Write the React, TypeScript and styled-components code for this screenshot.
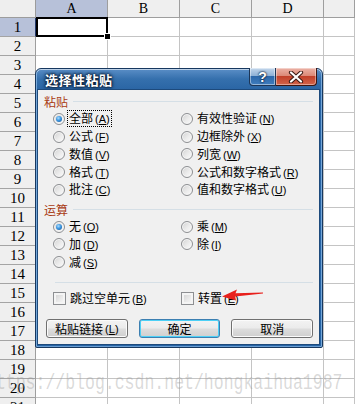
import React from "react";
import styled, { createGlobalStyle } from "styled-components";

const GlobalStyle = createGlobalStyle`
  html, body {
    margin: 0;
    padding: 0;
    background: #fff;
  }
  body {
    width: 355px;
    height: 404px;
    overflow: hidden;
  }
`;

const COLUMNS = ["A", "B", "C", "D", ""];
const ROW_COUNT = 21;

type Choice = { text: string; key: string; checked?: boolean; focused?: boolean };

const pasteChoices: Choice[] = [
  { text: "全部", key: "A", checked: true, focused: true },
  { text: "公式", key: "F" },
  { text: "数值", key: "V" },
  { text: "格式", key: "T" },
  { text: "批注", key: "C" },
  { text: "有效性验证", key: "N" },
  { text: "边框除外", key: "X" },
  { text: "列宽", key: "W" },
  { text: "公式和数字格式", key: "R" },
  { text: "值和数字格式", key: "U" },
];

const operationChoices: Choice[] = [
  { text: "无", key: "O", checked: true },
  { text: "加", key: "D" },
  { text: "减", key: "S" },
  { text: "乘", key: "M" },
  { text: "除", key: "I" },
];

const Page = styled.div`
  position: relative;
  width: 355px;
  height: 404px;
  overflow: hidden;
  background: #fff;
`;

const Sheet = styled.div`
  display: grid;
  grid-template-columns: 36px repeat(4, 72px) 1fr;
  grid-template-rows: 18px;
  grid-auto-rows: 19px;
  font-family: "Liberation Serif", serif;
  color: #000;
`;

const Corner = styled.div`
  box-sizing: border-box;
  background: #eeeeee;
  border-right: 1px solid #9c9c9c;
  border-bottom: 1px solid #9c9c9c;
`;

const ColHeader = styled.div<{ $active?: boolean }>`
  box-sizing: border-box;
  display: flex;
  align-items: center;
  justify-content: center;
  font-size: 14px;
  padding-top: 1px;
  background: ${(p) => (p.$active ? "#b7c1d9" : "#efefef")};
  border-right: 1px solid #9e9e9e;
  border-bottom: 1px solid ${(p) => (p.$active ? "#22386a" : "#9e9e9e")};
`;

const RowHeader = styled.div<{ $active?: boolean }>`
  box-sizing: border-box;
  display: flex;
  align-items: center;
  justify-content: center;
  font-size: 15px;
  padding-top: 1px;
  background: ${(p) => (p.$active ? "#b7c1d9" : "#efefef")};
  border-right: 1px solid ${(p) => (p.$active ? "#22386a" : "#9e9e9e")};
  border-bottom: 1px solid #a4a4a4;
`;

const Cell = styled.div<{ $selected?: boolean }>`
  box-sizing: border-box;
  position: relative;
  border-right: 1px solid #c4c4c4;
  border-bottom: 1px solid #c4c4c4;

  ${(p) =>
    p.$selected &&
    `
    &::after {
      content: "";
      position: absolute;
      left: 0;
      top: -1px;
      right: -1px;
      bottom: -1px;
      border: 2px solid #000;
      z-index: 1;
    }
    &::before {
      content: "";
      position: absolute;
      right: -3px;
      bottom: -3px;
      width: 5px;
      height: 5px;
      background: #000;
      box-shadow: 0 0 0 1px #fff;
      z-index: 2;
    }
  `}
`;

const Dialog = styled.div`
  position: absolute;
  left: 35px;
  top: 68px;
  width: 288px;
  height: 280px;
  box-sizing: border-box;
  display: flex;
  flex-direction: column;
  padding: 0 3px 3px 2px;
  border: 1px solid #17385f;
  border-radius: 6px 6px 2px 2px;
  background: linear-gradient(180deg, #5a8ec6 0px, #3570ad 10px, #2a65a4 21px, #2664a5 100%);
  box-shadow: inset 0 1px 0 rgba(255, 255, 255, 0.6),
    inset 1px 0 0 rgba(150, 195, 240, 0.7), inset -1px 0 0 rgba(150, 195, 240, 0.7),
    inset 0 -1px 0 rgba(150, 195, 240, 0.6);
  font-family: "Noto Sans CJK SC", "Liberation Sans", sans-serif;
  font-size: 12px;
  color: #000;
`;

const TitleBar = styled.div`
  height: 21px;
  display: flex;
  align-items: center;
  padding-left: 7px;
`;

const Title = styled.span`
  flex: 1;
  color: #fff;
  font-size: 13px;
  font-weight: bold;
  letter-spacing: 0.5px;
  text-shadow: 0 0 2px #0a1a30, 0 0 3px #0a1a30, 0 0 4px #0a1a30;
`;

const Controls = styled.div`
  display: flex;
  align-self: flex-start;
  margin-top: -1px;
  margin-right: 2px;
  height: 18px;
`;

const HelpButton = styled.div`
  box-sizing: border-box;
  width: 27px;
  height: 18px;
  display: flex;
  align-items: center;
  justify-content: center;
  border: 1px solid #1c3556;
  border-top: none;
  border-radius: 0 0 0 4px;
  background: linear-gradient(180deg, #c3d7ec 0%, #8fb1d6 45%, #2d68aa 50%, #3f7dbd 100%);
  box-shadow: inset 0 0 0 1px rgba(255, 255, 255, 0.45);
  color: #fff;
  font-family: "Liberation Sans", sans-serif;
  font-weight: bold;
  font-size: 14px;
  text-shadow: 0 0 2px #0b1c33, 0 0 2px #0b1c33;
`;

const CloseButton = styled.div`
  box-sizing: border-box;
  width: 41px;
  height: 18px;
  display: flex;
  align-items: center;
  justify-content: center;
  border: 1px solid #3d1510;
  border-left: none;
  border-top: none;
  border-radius: 0 0 4px 0;
  background: linear-gradient(180deg, #ecb2a6 0%, #dc8a78 45%, #c2412a 50%, #d2644a 100%);
  box-shadow: inset 0 0 0 1px rgba(255, 255, 255, 0.4);
`;

const Body = styled.div`
  flex: 1;
  display: flex;
  flex-direction: column;
  padding: 3px 6px 0 6px;
  background: #f0f0f0;
  box-shadow: 0 0 0 1px #1d4a7c;
`;

const SectionHead = styled.div<{ $gap?: number }>`
  display: flex;
  align-items: center;
  height: 17px;
  margin-top: ${(p) => p.$gap ?? 0}px;
  color: #a83a12;
  font-size: 12px;

  &::after {
    content: "";
    flex: 1;
    height: 1px;
    margin-left: 5px;
    background: #d5dfe6;
  }
`;

const OptionGrid = styled.div<{ $rows: number }>`
  display: grid;
  grid-template-columns: 128px 1fr;
  grid-template-rows: repeat(${(p) => p.$rows}, 17.75px);
  grid-auto-flow: column;
  margin-left: 9px;
`;

const Option = styled.div`
  display: flex;
  align-items: center;
  gap: 3px;
  white-space: nowrap;
`;

const RadioMark = styled.span<{ $checked?: boolean }>`
  position: relative;
  box-sizing: border-box;
  width: 12px;
  height: 12px;
  border-radius: 50%;
  border: 1px solid #8d8f92;
  background: linear-gradient(135deg, #d2d2d2 0%, #ececec 55%, #fbfbfb 100%);
  box-shadow: inset 0 0 0 1px #f6f6f6;

  &::after {
    content: "";
    display: ${(p) => (p.$checked ? "block" : "none")};
    position: absolute;
    left: 2px;
    top: 2px;
    width: 6px;
    height: 6px;
    border-radius: 50%;
    background: radial-gradient(circle at 40% 35%, #a9dcff 0%, #3c96e0 45%, #14508f 100%);
  }
`;

const CheckMark = styled.span`
  box-sizing: border-box;
  width: 13px;
  height: 13px;
  border: 1px solid #8d8f92;
  background: linear-gradient(135deg, #cfcfcf 0%, #e9e9e9 55%, #fafafa 100%);
  box-shadow: inset 0 0 0 2px #f4f4f4;
`;

const OptionLabel = styled.span<{ $focused?: boolean }>`
  padding: 0 1px;
  line-height: 14px;
  outline: ${(p) => (p.$focused ? "1px dotted #000" : "none")};
`;

const Key = styled.span`
  margin-left: 2px;
  font-family: "Liberation Sans", sans-serif;
  font-size: 11px;
`;

const Separator = styled.div`
  height: 1px;
  margin: 11px 0 0 11px;
  background: #d5dfe6;
`;

const CheckRow = styled.div`
  display: grid;
  grid-template-columns: 128px 1fr;
  height: 14px;
  margin: 8px 0 0 9px;
`;

const ButtonRow = styled.div`
  display: flex;
  gap: 11px;
  margin-top: 14px;
  padding-left: 2px;
`;

const Button = styled.div<{ $default?: boolean }>`
  box-sizing: border-box;
  width: 82px;
  height: 19px;
  display: flex;
  align-items: center;
  justify-content: center;
  border: 1px solid ${(p) => (p.$default ? "#3c7fb1" : "#707070")};
  border-radius: 3px;
  background: linear-gradient(180deg, #f3f3f3 0%, #ebebeb 48%, #dddddd 52%, #cfcfcf 100%);
  box-shadow: ${(p) =>
    p.$default ? "inset 0 0 0 1px #4cd0f6" : "inset 0 0 0 1px #fbfbfb"};
  white-space: nowrap;
`;

const Arrow = styled.svg`
  position: absolute;
  left: 218px;
  top: 286px;
  overflow: visible;
`;

const Watermark = styled.div`
  position: absolute;
  left: -14px;
  top: 370px;
  font-family: "Liberation Mono", monospace;
  font-size: 16.5px;
  color: rgba(150, 150, 150, 0.36);
  white-space: nowrap;
  transform: scaleY(1.35);
  transform-origin: 0 0;
  pointer-events: none;
`;

const Choices = ({ items }: { items: Choice[] }) => (
  <>
    {items.map((c) => (
      <Option key={c.key}>
        <RadioMark $checked={c.checked} />
        <OptionLabel $focused={c.focused}>
          {c.text}
          <Key>
            (<u>{c.key}</u>)
          </Key>
        </OptionLabel>
      </Option>
    ))}
  </>
);

export default function App() {
  return (
    <Page>
      <GlobalStyle />
      <Sheet>
        <Corner />
        {COLUMNS.map((c, i) => (
          <ColHeader key={"h" + i} $active={c === "A"}>
            {c}
          </ColHeader>
        ))}
        {Array.from({ length: ROW_COUNT }).map((_, r) => (
          <React.Fragment key={r}>
            <RowHeader $active={r === 0}>{r + 1}</RowHeader>
            {COLUMNS.map((_, c) => (
              <Cell key={c} $selected={r === 0 && c === 0} />
            ))}
          </React.Fragment>
        ))}
      </Sheet>

      <Dialog>
        <TitleBar>
          <Title>选择性粘贴</Title>
          <Controls>
            <HelpButton>?</HelpButton>
            <CloseButton>
              <svg width="16" height="12" viewBox="0 0 16 12">
                <path d="M3 1.5 L13 10.5 M13 1.5 L3 10.5" stroke="#3b1a14" strokeWidth="4.2" strokeLinecap="round" />
                <path d="M3 1.5 L13 10.5 M13 1.5 L3 10.5" stroke="#fff" strokeWidth="2.2" strokeLinecap="round" />
              </svg>
            </CloseButton>
          </Controls>
        </TitleBar>
        <Body>
          <SectionHead>粘贴</SectionHead>
          <OptionGrid $rows={5}>
            <Choices items={pasteChoices} />
          </OptionGrid>
          <SectionHead $gap={2}>运算</SectionHead>
          <OptionGrid $rows={3}>
            <Choices items={operationChoices} />
          </OptionGrid>
          <Separator />
          <CheckRow>
            <Option>
              <CheckMark />
              <OptionLabel>
                跳过空单元
                <Key>
                  (<u>B</u>)
                </Key>
              </OptionLabel>
            </Option>
            <Option>
              <CheckMark />
              <OptionLabel>
                转置
                <Key>
                  (<u>E</u>)
                </Key>
              </OptionLabel>
            </Option>
          </CheckRow>
          <ButtonRow>
            <Button>
              粘贴链接
              <Key>
                (<u>L</u>)
              </Key>
            </Button>
            <Button $default>确定</Button>
            <Button>取消</Button>
          </ButtonRow>
        </Body>
      </Dialog>

      <Arrow width="48" height="16" viewBox="0 0 48 16">
        <path d="M4 10.5 L19 3.5 L17.5 7.2 L45 6.6 L45 7.6 L17.2 10.6 L18 14.5 Z" fill="#e8201c" />
      </Arrow>

      <Watermark>https://blog.csdn.net/hongkaihua1987</Watermark>
    </Page>
  );
}
